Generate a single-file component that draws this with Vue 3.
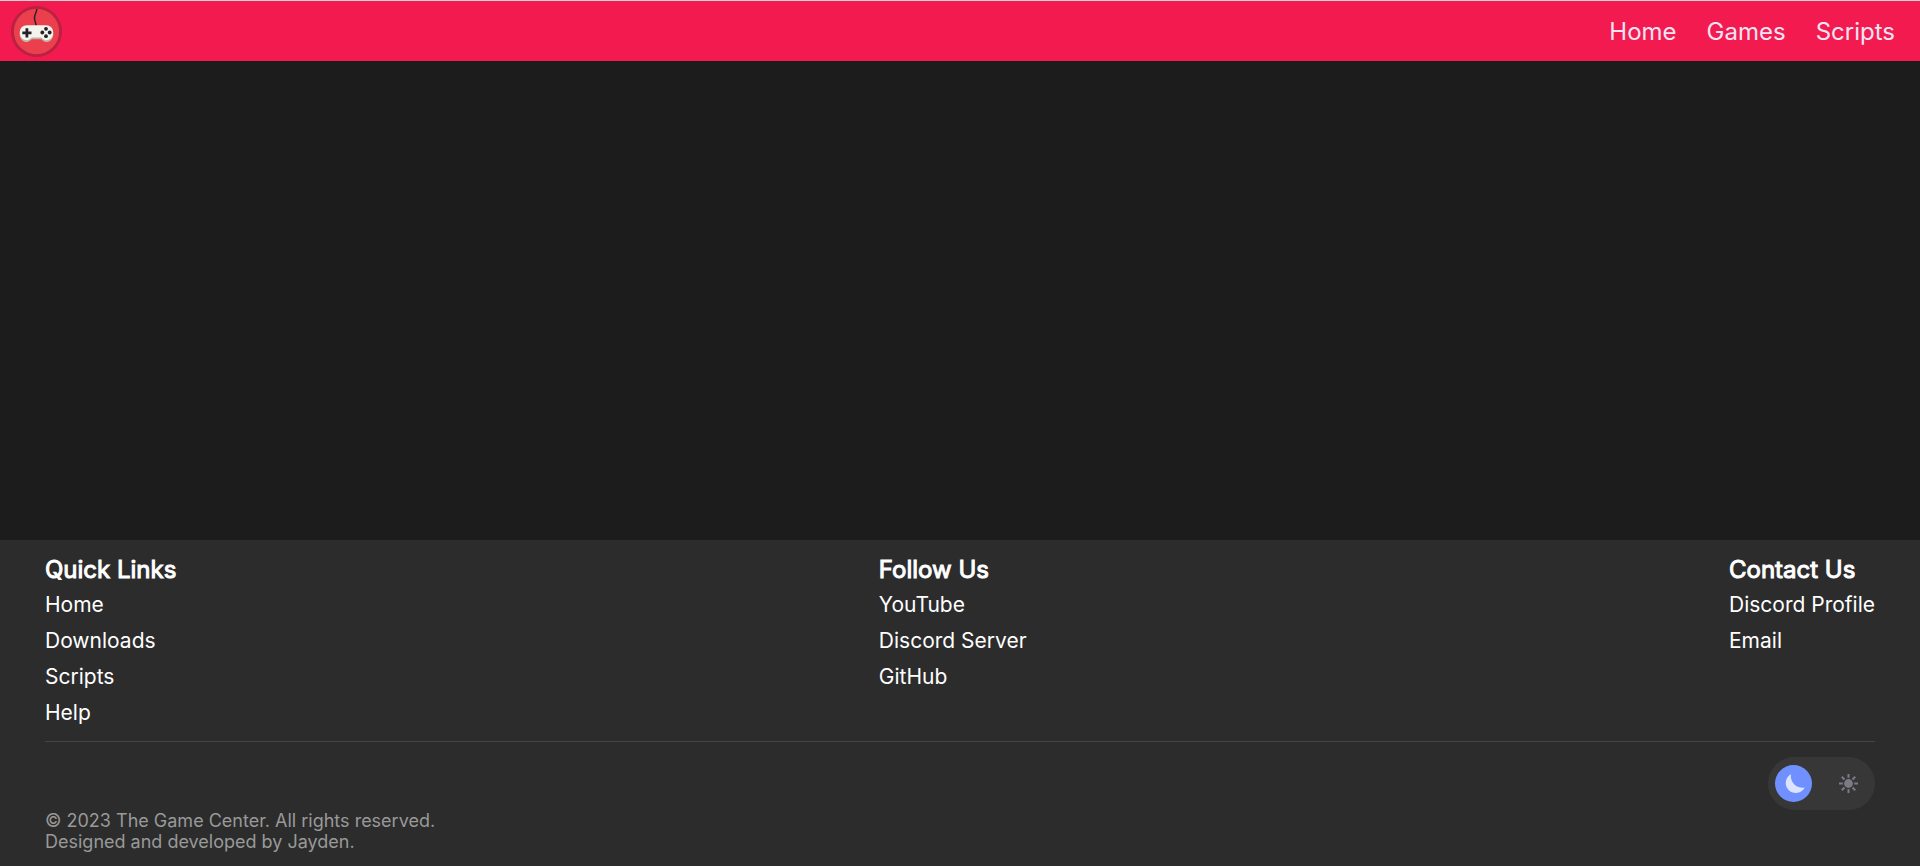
<script setup>
import { ref } from 'vue'

const light = ref(false)

const nav = ['Home', 'Games', 'Scripts']
const columns = [
  { title: 'Quick Links', links: ['Home', 'Downloads', 'Scripts', 'Help'] },
  { title: 'Follow Us', links: ['YouTube', 'Discord Server', 'GitHub'] },
  { title: 'Contact Us', links: ['Discord Profile', 'Email'] }
]
const rays = [0, 45, 90, 135, 180, 225, 270, 315]
</script>

<template>
  <div class="page">
    <header class="topbar">
      <a class="logo" href="#" aria-label="The Game Center">
        <svg viewBox="0 0 51 51" width="51" height="51" aria-hidden="true">
          <circle cx="25.5" cy="25.5" r="25.5" fill="#b82140" />
          <circle cx="25.5" cy="25.5" r="22.7" fill="#ec3f4e" />
          <path d="M25.700 3c.3 4-2.400 5-2.200 9s1.400 4 1.600 8" fill="none" stroke="#2b2026" stroke-width="1.500" />
          <path d="M16 20.800h19c4.500 0 7.300 3 7.300 7.400 0 4.500-3 7.800-6.900 7.800-2.900 0-4-2.800-6-2.800h-7.800c-2 0-3.100 2.800-6 2.800-3.900 0-6.900-3.300-6.900-7.800 0-4.400 2.800-7.400 7.300-7.400z" fill="#bdb5a6" />
          <path d="M16 19.300h19c4.300 0 7.200 3 7.200 7.200 0 4.400-3 7.700-6.800 7.700-2.900 0-4-2.800-6-2.800h-7.800c-2 0-3.100 2.800-6 2.800-3.800 0-6.800-3.300-6.800-7.700 0-4.200 2.900-7.200 7.200-7.200z" fill="#f5f3ee" />
          <path d="M14.500 22.200h2.800v3.200h3.200v2.800h-3.200v3.200h-2.800v-3.200h-3.200v-2.800h3.200z" fill="#252226" />
          <g fill="#252226">
            <circle cx="35" cy="22.800" r="1.900" />
            <circle cx="31.300" cy="26.500" r="1.900" />
            <circle cx="38.700" cy="26.500" r="1.900" />
            <circle cx="35" cy="30.200" r="1.900" />
          </g>
        </svg>
      </a>
      <nav class="menu" aria-label="Main">
        <a v-for="item in nav" :key="item" href="#">{{ item }}</a>
      </nav>
    </header>

    <main class="content"></main>

    <footer class="footer">
      <div class="columns">
        <section v-for="col in columns" :key="col.title">
          <h2>{{ col.title }}</h2>
          <ul>
            <li v-for="link in col.links" :key="link"><a href="#">{{ link }}</a></li>
          </ul>
        </section>
      </div>
      <div class="bottom">
        <label class="toggle" :class="{ light }">
          <input v-model="light" type="checkbox" role="switch" aria-label="Light theme" />
          <span class="option moon">
            <svg viewBox="0 0 37 37" width="37" height="37" aria-hidden="true">
              <path d="M16 9.200a10 10 0 1 0 13.700 13.200A11.500 11.500 0 0 1 16 9.200z" fill="currentColor" />
            </svg>
          </span>
          <span class="option sun">
            <svg viewBox="0 0 37 37" width="37" height="37" aria-hidden="true">
              <circle cx="18.500" cy="18.500" r="4.400" fill="currentColor" />
              <path v-for="r in rays" :key="r" d="M18.500 9v3.800" :transform="`rotate(${r} 18.5 18.5)`" stroke="currentColor" stroke-width="2" />
            </svg>
          </span>
        </label>
        <p class="copyright">© 2023 The Game Center. All rights reserved.<br />Designed and developed by Jayden.</p>
      </div>
    </footer>
  </div>
</template>

<style>
body {
  background: #1c1c1c;
}
</style>

<style scoped>
.page {
  display: flex;
  flex-direction: column;
  min-height: 100vh;
  font-family: Inter, "Liberation Sans", sans-serif;
  color: #fff;
}
a {
  color: inherit;
  text-decoration: none;
}
.topbar {
  display: flex;
  align-items: center;
  justify-content: space-between;
  height: 60px;
  padding: 0 25px 0 11px;
  border-top: 1px solid #d5d5d5;
  background: #f31a4f;
}
.logo,
.logo svg {
  display: block;
}
.menu {
  display: flex;
  gap: 30px;
  padding-top: 2px;
  font-size: 24px;
  line-height: 30px;
  color: #f0e4f4;
}
.content {
  flex: 1;
}
.footer {
  padding: 15px 45px 14px;
  background: #2c2c2c;
}
.columns {
  display: flex;
  justify-content: space-between;
  padding-bottom: 10px;
  border-bottom: 1px solid #444;
}
h2 {
  margin: 0;
  font-size: 24px;
  line-height: 30px;
  font-weight: 400;
  -webkit-text-stroke: 1px currentColor;
}
ul {
  margin: 0;
  padding: 2px 0 0;
  list-style: none;
}
li {
  font-size: 21px;
  line-height: 36px;
}
.bottom {
  display: flex;
  flex-direction: column;
  padding-top: 15px;
}
.toggle {
  position: relative;
  display: flex;
  align-self: flex-end;
  justify-content: space-between;
  padding: 8px 8px 8px 7px;
  gap: 18px;
  border-radius: 27px;
  background: #373737;
  cursor: pointer;
}
.toggle input {
  position: absolute;
  inset: 0;
  width: 100%;
  height: 100%;
  margin: 0;
  opacity: 0;
  cursor: pointer;
}
.option {
  border-radius: 50%;
  color: #7d7a85;
}
.option svg {
  display: block;
}
.toggle:not(.light) .moon,
.toggle.light .sun {
  background: #7090ff;
  color: #dce3ff;
}
.copyright {
  margin: 0;
  font-size: 18px;
  line-height: 21px;
  color: #999;
}
</style>
